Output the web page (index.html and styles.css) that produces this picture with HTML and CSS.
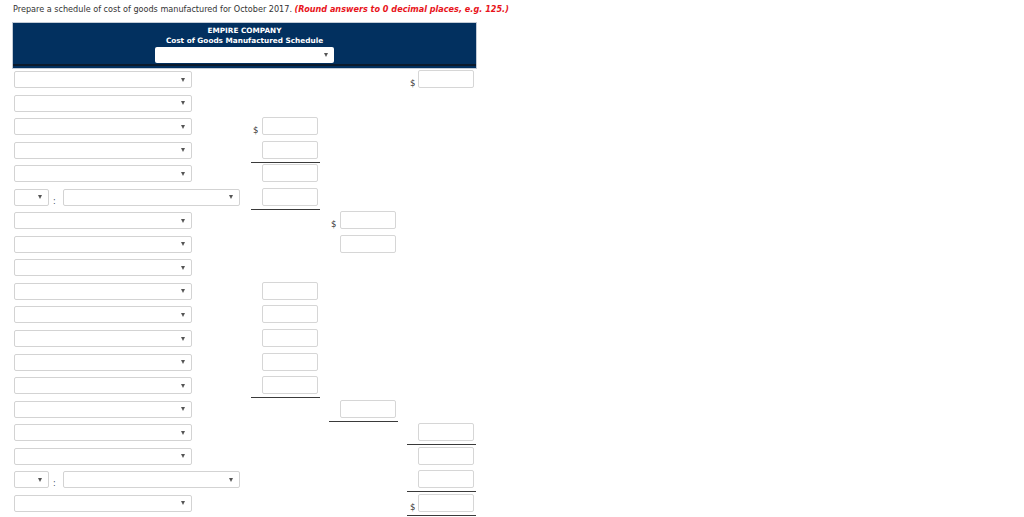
FILE: index.html
```html
<!DOCTYPE html>
<html>
<head>
<meta charset="utf-8">
<link rel="stylesheet" href="styles.css">
</head>
<body>
<p class="prompt">Prepare a schedule of cost of goods manufactured for October 2017. <em class="note">(Round answers to 0 decimal places, e.g. 125.)</em></p>
<div class="hdr">
  <div class="hdr-t">EMPIRE COMPANY</div>
  <div class="hdr-t">Cost of Goods Manufactured Schedule</div>
  <div class="hdr-sel"><span class="arr"></span></div>
  <div class="hdr-line"></div>
</div>
<div class="rows">
  <div class="row"><div class="c1"><div class="sel"><span class="arr"></span></div></div><div class="amt c4"><span class="dol">$</span><span class="inp"></span></div></div>
  <div class="row"><div class="c1"><div class="sel"><span class="arr"></span></div></div></div>
  <div class="row"><div class="c1"><div class="sel"><span class="arr"></span></div></div><div class="amt c2"><span class="dol">$</span><span class="inp"></span></div></div>
  <div class="row"><div class="c1"><div class="sel"><span class="arr"></span></div></div><div class="amt c2 ul"><span class="dol"></span><span class="inp"></span></div></div>
  <div class="row"><div class="c1"><div class="sel"><span class="arr"></span></div></div><div class="amt c2"><span class="dol"></span><span class="inp"></span></div></div>
  <div class="row"><div class="c1 pair"><div class="sel sm"><span class="arr"></span></div><span class="colon">:</span><div class="sel mid"><span class="arr"></span></div></div><div class="amt c2 ul"><span class="dol"></span><span class="inp"></span></div></div>
  <div class="row"><div class="c1"><div class="sel"><span class="arr"></span></div></div><div class="amt c3"><span class="dol">$</span><span class="inp"></span></div></div>
  <div class="row"><div class="c1"><div class="sel"><span class="arr"></span></div></div><div class="amt c3"><span class="dol"></span><span class="inp"></span></div></div>
  <div class="row"><div class="c1"><div class="sel"><span class="arr"></span></div></div></div>
  <div class="row"><div class="c1"><div class="sel"><span class="arr"></span></div></div><div class="amt c2"><span class="dol"></span><span class="inp"></span></div></div>
  <div class="row"><div class="c1"><div class="sel"><span class="arr"></span></div></div><div class="amt c2"><span class="dol"></span><span class="inp"></span></div></div>
  <div class="row"><div class="c1"><div class="sel"><span class="arr"></span></div></div><div class="amt c2"><span class="dol"></span><span class="inp"></span></div></div>
  <div class="row"><div class="c1"><div class="sel"><span class="arr"></span></div></div><div class="amt c2"><span class="dol"></span><span class="inp"></span></div></div>
  <div class="row"><div class="c1"><div class="sel"><span class="arr"></span></div></div><div class="amt c2 ul"><span class="dol"></span><span class="inp"></span></div></div>
  <div class="row"><div class="c1"><div class="sel"><span class="arr"></span></div></div><div class="amt c3 ul"><span class="dol"></span><span class="inp"></span></div></div>
  <div class="row"><div class="c1"><div class="sel"><span class="arr"></span></div></div><div class="amt c4 ul"><span class="dol"></span><span class="inp"></span></div></div>
  <div class="row"><div class="c1"><div class="sel"><span class="arr"></span></div></div><div class="amt c4"><span class="dol"></span><span class="inp"></span></div></div>
  <div class="row"><div class="c1 pair"><div class="sel sm"><span class="arr"></span></div><span class="colon">:</span><div class="sel mid"><span class="arr"></span></div></div><div class="amt c4 ul"><span class="dol"></span><span class="inp"></span></div></div>
  <div class="row"><div class="c1"><div class="sel"><span class="arr"></span></div></div><div class="amt c4 ul"><span class="dol">$</span><span class="inp"></span></div></div>
</div>
</body>
</html>
```

FILE: styles.css
```css
html, body {
  margin: 0;
  padding: 0;
  background: #fff;
}
body {
  font-family: "DejaVu Sans", Verdana, sans-serif;
  color: #333;
  padding-left: 12px;
}
.prompt {
  margin: 0;
  padding-top: 4px;
  padding-left: 1px;
  font-size: 8.12px;
  line-height: 11px;
  height: 18px;
  color: #333;
  white-space: nowrap;
}
.note {
  color: #e8141b;
  font-weight: bold;
  font-style: italic;
}
.hdr {
  width: 463px;
  border: 1px solid #c3cbd6;
  background: #02305f;
  padding-top: 3px;
  padding-bottom: 2px;
}
.hdr-t {
  color: #fff;
  font-weight: bold;
  font-size: 7.3px;
  line-height: 10px;
  text-align: center;
}
.hdr-sel {
  position: relative;
  width: 179px;
  height: 16px;
  margin: 1px auto 0;
  background: #fff;
  border-radius: 2px;
}
.hdr-line {
  height: 2px;
  margin-top: 1px;
  background: #0b1a2c;
}
.rows {
  margin-top: 1px;
  margin-left: 2px;
}
.row {
  display: grid;
  grid-template-columns: 237px 69px 9px 69px 9px 69px;
  height: 23.55px;
}
.c1 {
  grid-column: 1;
  grid-row: 1;
  padding-top: 1px;
}
.c2 { grid-column: 2; grid-row: 1; }
.c3 { grid-column: 4; grid-row: 1; }
.c4 { grid-column: 6; grid-row: 1; }
.sel {
  position: relative;
  box-sizing: border-box;
  width: 178px;
  height: 17px;
  border: 1px solid #d3d3d3;
  border-radius: 2px;
  background: #fff;
}
.arr {
  position: absolute;
  right: 6px;
  top: 50%;
  margin-top: -2px;
  width: 0;
  height: 0;
  border-left: 2.5px solid transparent;
  border-right: 2.5px solid transparent;
  border-top: 4px solid #555;
}
.pair {
  display: flex;
  align-items: flex-start;
}
.sel.sm { width: 35px; }
.sel.mid { width: 177px; }
.colon {
  box-sizing: border-box;
  width: 14px;
  height: 17px;
  padding-left: 4px;
  display: flex;
  align-items: flex-end;
  font-size: 8px;
  line-height: 8px;
  color: #3a4a5a;
}
.amt {
  box-sizing: border-box;
  height: 22px;
  display: flex;
  align-items: flex-start;
  padding-left: 2px;
}
.amt.ul { border-bottom: 1px solid #3a3a3a; }
.amt.c4 { padding-left: 3px; }
.dol {
  width: 9px;
  height: 18px;
  display: flex;
  align-items: flex-end;
  font-size: 8.5px;
  line-height: 9px;
  color: #333;
}
.amt.c4 .dol { width: 8px; }
.inp {
  box-sizing: border-box;
  width: 56px;
  height: 18px;
  border: 1px solid #d6d6d6;
  border-radius: 2px;
  background: #fff;
}
```
